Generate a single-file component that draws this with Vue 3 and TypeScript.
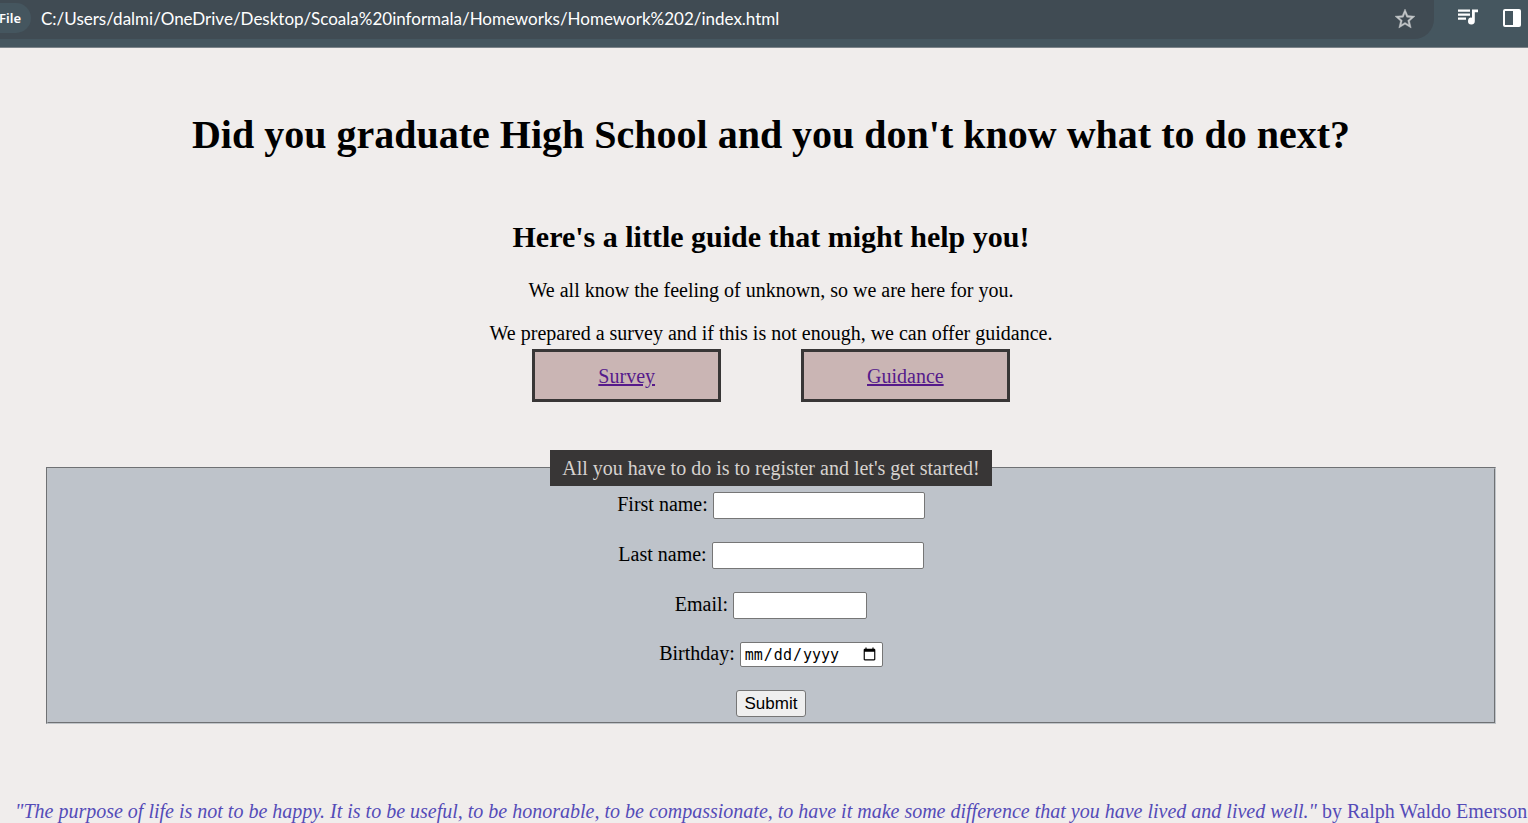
<script setup lang="ts">
import { ref } from 'vue'

interface TextField {
  id: string
  label: string
  type: string
  short?: boolean
}

const address = ref('C:/Users/dalmi/OneDrive/Desktop/Scoala%20informala/Homeworks/Homework%202/index.html')

const fields: TextField[] = [
  { id: 'first-name', label: 'First name:', type: 'text' },
  { id: 'last-name', label: 'Last name:', type: 'text' },
  { id: 'email', label: 'Email:', type: 'email', short: true },
]
</script>

<template>
  <div class="page">
    <header class="toolbar">
      <div class="omnibox">
        <button class="chip" type="button">File</button>
        <input v-model="address" class="address" type="text" aria-label="Address" />
        <button class="icon star" type="button" aria-label="Bookmark this page">
          <svg width="24" height="24" viewBox="0 0 24 24" fill="#c2c6c8">
            <path d="M22 9.24l-7.19-.62L12 2 9.19 8.63 2 9.24l5.46 4.73L5.82 21 12 17.27 18.18 21l-1.63-7.03L22 9.24zM12 15.4l-3.76 2.27 1-4.28-3.32-2.88 4.38-.38L12 6.1l1.71 4.04 4.38.38-3.32 2.88 1 4.28L12 15.4z" stroke="#c2c6c8" stroke-width="0.4" />
          </svg>
        </button>
      </div>
      <div class="actions">
        <button class="icon" type="button" aria-label="Media controls">
          <svg width="24" height="24" viewBox="0 0 24 24" fill="#ffffff">
            <path d="M2 3.6h12v2.2H2zM2 7.6h12v2.2H2zM2 11.6h8v2.2H2zM16 3.6h6v2.6h-3.2V15a3.4 3.4 0 1 1-2.8-3.3z" />
          </svg>
        </button>
        <button class="icon" type="button" aria-label="Side panel">
          <svg width="24" height="24" viewBox="0 0 24 24">
            <rect x="4" y="4" width="16" height="16" rx="1" fill="none" stroke="#ffffff" stroke-width="2" />
            <path d="M13 4h7v16h-7z" fill="#ffffff" />
          </svg>
        </button>
      </div>
    </header>

    <main>
      <h1>Did you graduate High School and you don't know what to do next?</h1>
      <h2>Here's a little guide that might help you!</h2>
      <p>We all know the feeling of unknown, so we are here for you.</p>
      <p>We prepared a survey and if this is not enough, we can offer guidance.</p>
      <nav class="choices">
        <a href="#survey">Survey</a>
        <a href="#guidance">Guidance</a>
      </nav>

      <form @submit.prevent>
        <fieldset>
          <legend>All you have to do is to register and let's get started!</legend>
          <div class="rows">
            <div v-for="field in fields" :key="field.id" class="row">
              <label :for="field.id">{{ field.label }}</label>
              <input :id="field.id" :type="field.type" :class="['box', { short: field.short }]" />
            </div>
            <div class="row">
              <label for="birthday">Birthday:</label>
              <input id="birthday" type="date" class="date" />
            </div>
            <button class="submit" type="submit">Submit</button>
          </div>
        </fieldset>
      </form>
    </main>

    <footer><em>"The purpose of life is not to be happy. It is to be useful, to be honorable, to be compassionate, to have it make some difference that you have lived and lived well."</em> by Ralph Waldo Emerson</footer>
  </div>
</template>

<style>
html {
  background: #f0edec;
}
body {
  margin: 0;
  overflow: hidden;
}
</style>

<style scoped>
.page {
  min-height: 100vh;
  overflow: hidden;
  background: #f0edec;
  color: #000;
  font: 20px/23px "Liberation Serif", "Times New Roman", serif;
}
.toolbar {
  display: flex;
  justify-content: space-between;
  height: 47px;
  background: #45565f;
  border-bottom: 1px solid #7b8389;
}
.omnibox {
  box-sizing: border-box;
  flex: 1;
  display: flex;
  align-items: center;
  height: 39px;
  padding: 0 17px 2px 0;
  background: #404b53;
  border-radius: 0 0 20px 0;
}
.chip {
  width: 31px;
  height: 30px;
  margin: 0 10px 2px 0;
  padding: 0 10px 0 0;
  display: flex;
  justify-content: flex-end;
  align-items: center;
  border: 0;
  border-radius: 0 15px 15px 0;
  background: #45565f;
  color: #fff;
  font: 600 13px "Noto Sans", "Open Sans", sans-serif;
}
.address {
  flex: 1;
  min-width: 0;
  padding: 0;
  border: 0;
  outline: 0;
  background: transparent;
  color: #fff;
  font: 17px/24px Lato, "Open Sans", sans-serif;
}
.icon {
  display: flex;
  padding: 0;
  border: 0;
  background: transparent;
}
.actions {
  display: flex;
  gap: 20px;
  align-items: center;
  height: 36px;
  padding: 0 4px 0 22px;
}
main {
  padding: 64px 32px 0 46px;
  text-align: center;
}
h1 {
  margin: 0 0 62px;
  font-size: 40px;
  line-height: 46px;
}
h2 {
  margin: 0 0 25px;
  font-size: 30px;
  line-height: 34px;
}
p {
  margin: 0 0 20px;
}
.choices {
  display: flex;
  justify-content: center;
  gap: 80px;
  margin: -16px 0 48px;
}
.choices a {
  padding: 13px 63px 11px;
  border: 3px solid #383636;
  background: #cab5b4;
  color: #551a8b;
}
fieldset {
  min-width: 0;
  margin: 0;
  padding: 0 14px 5px;
  border: 2px groove #c0c4c8;
  background: #bec3ca;
}
legend {
  margin: 0 auto;
  padding: 7px 12px 6px;
  background: #383636;
  color: #d6d2cf;
}
.rows {
  display: flex;
  flex-direction: column;
  align-items: center;
  gap: 23px;
  padding-top: 6px;
}
.row {
  display: flex;
  align-items: center;
  gap: 5px;
}
.row label {
  padding-bottom: 2px;
}
.box,
.date {
  box-sizing: border-box;
  width: 212px;
  height: 27px;
  padding: 1px 3px;
  border: 1px solid #767676;
  border-radius: 2px;
  background: #fff;
  color: #000;
  font: 16px "Liberation Sans", Arial, sans-serif;
}
.short {
  width: 134px;
}
.date {
  width: 143px;
  height: 25px;
  font: 15px "DejaVu Sans Mono", monospace;
}
.submit {
  box-sizing: border-box;
  width: 70px;
  height: 27px;
  padding: 0;
  border: 1px solid #767676;
  border-radius: 3px;
  background: #efefef;
  color: #000;
  font: 17px "Liberation Sans", Arial, sans-serif;
}
footer {
  margin-top: 76px;
  padding-left: 15px;
  color: #544bb8;
  white-space: nowrap;
}
</style>
